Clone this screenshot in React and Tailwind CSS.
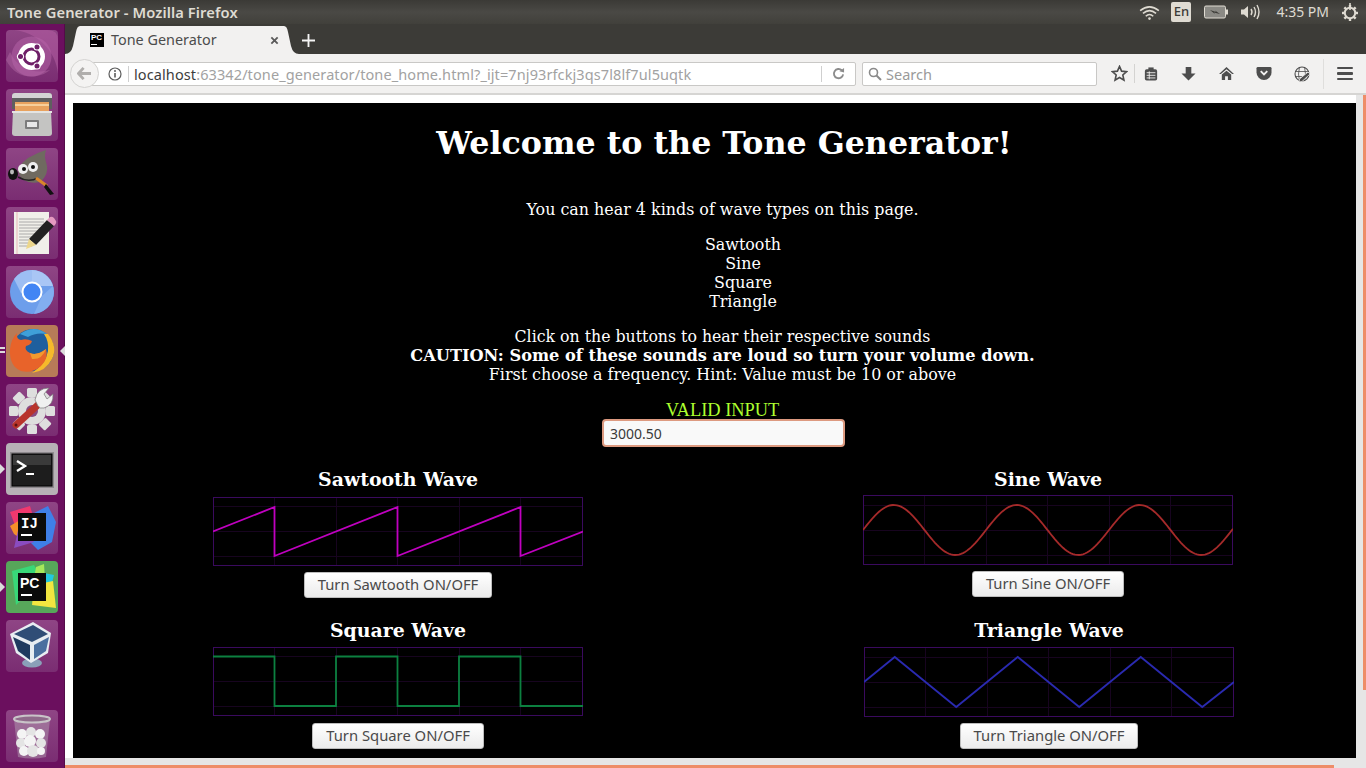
import React from 'react';

const PURPLE_TILE = 'bg-gradient-to-b from-[#8f4585] to-[#7a2d72]';

function UbuntuIcon() {
  return (
    <svg viewBox="0 0 52 52" className="w-full h-full">
      <path d="M8 0 C30 2 50 20 52 44 L52 10 Q52 0 42 0 Z" fill="#b75fa6" opacity="0.5" />
      <path d="M0 30 C10 50 32 50 44 40 C30 44 12 40 4 22 Z" fill="#c77db8" opacity="0.35" />
      <circle cx="25.5" cy="26.5" r="20" fill="#b866aa" opacity="0.5" />
      <circle cx="25.5" cy="26.5" r="13.5" fill="#fff" />
      <circle cx="25.5" cy="26.5" r="7.5" fill="none" stroke="#6e1f68" strokeWidth="3" />
      <circle cx="31" cy="17" r="3.6" fill="#fff" />
      <circle cx="14.5" cy="26.5" r="3.6" fill="#fff" />
      <circle cx="31" cy="36" r="3.6" fill="#fff" />
      <circle cx="31" cy="17" r="2.5" fill="#6e1f68" />
      <circle cx="14.5" cy="26.5" r="2.5" fill="#6e1f68" />
      <circle cx="31" cy="36" r="2.5" fill="#6e1f68" />
    </svg>
  );
}

function FilesIcon() {
  return (
    <svg viewBox="0 0 52 52" className="w-full h-full">
      <path d="M6 7 Q6 4 9 4 L43 4 Q46 4 46 7 L46 20 L6 20 Z" fill="#5f5f5f" />
      <path d="M6 7 Q6 4 9 4 L43 4 Q46 4 46 7 L46 9 L6 9 Z" fill="#d4d4d4" />
      <rect x="9" y="13" width="34" height="10" fill="#e8a25e" />
      <rect x="9" y="15" width="34" height="2" fill="#f7cf9a" />
      <path d="M7 22 L45 22 L46 44 Q46 47 43 47 L9 47 Q6 47 6 44 Z" fill="#c4c4c2" />
      <rect x="6" y="22" width="40" height="2" fill="#e4e4e2" />
      <rect x="19" y="31" width="14" height="9" rx="1" fill="#7c7c7c" />
      <rect x="21" y="33" width="10" height="5" fill="#e8e8e8" />
    </svg>
  );
}

function GimpIcon() {
  return (
    <svg viewBox="0 0 52 52" className="w-full h-full">
      <path d="M12 20 Q20 8 40 2 Q38 8 40 14 Q44 26 34 34 Q24 36 18 32 Q12 28 12 20 Z" fill="#6f6a60" />
      <ellipse cx="7" cy="26" rx="5" ry="6" fill="#111" />
      <ellipse cx="6" cy="24" rx="2" ry="2.4" fill="#bbb" />
      <circle cx="17" cy="21" r="5" fill="#eee" />
      <circle cx="27" cy="19" r="5" fill="#eee" />
      <circle cx="18" cy="21" r="2" fill="#111" />
      <circle cx="27" cy="19" r="2" fill="#111" />
      <path d="M12 29 Q22 35 32 30" fill="none" stroke="#222" strokeWidth="1.5" />
      <path d="M30 30 L41 38" stroke="#d9862a" strokeWidth="3" />
      <path d="M40 36 L48 46 L44 47 L38 39 Z" fill="#111" />
    </svg>
  );
}

function EditorIcon() {
  return (
    <svg viewBox="0 0 52 52" className="w-full h-full">
      <rect x="8" y="5" width="35" height="42" fill="#f0efe9" />
      <path d="M11 5 L11 47" stroke="#e9b7b7" />
      {[12, 15, 18, 21, 24, 27, 30, 33, 36, 39].map(y => (
        <path key={y} d={`M13 ${y} L${y > 27 ? 26 : 38} ${y}`} stroke="#9a9a9a" strokeWidth="0.8" />
      ))}
      <path d="M41 13 L48 19 L30 38 L23 32 Z" fill="#222" />
      <path d="M41 13 L44 10 Q46 9 48 11 L50 14 Q51 16 48 19 Z" fill="#e49ac0" />
      <path d="M23 32 L30 38 L20 42 Z" fill="#ecd68a" />
    </svg>
  );
}

function ChromiumIcon() {
  return (
    <svg viewBox="0 0 52 52" className="w-full h-full">
      <circle cx="26" cy="26" r="22" fill="#6d9eeb" />
      <path d="M26 4 A22 22 0 0 1 47 20 L26 20 Z" fill="#a9c6f5" />
      <path d="M8 13 A22 22 0 0 1 26 4 L26 20 L15 27 Z" fill="#9dbef3" />
      <path d="M47 20 A22 22 0 0 1 28 48 L36 30 Z" fill="#82aef0" />
      <circle cx="26" cy="26" r="9.5" fill="#4285f4" stroke="#fff" strokeWidth="2" />
    </svg>
  );
}

function FirefoxIcon() {
  return (
    <svg viewBox="0 0 52 52" className="w-full h-full">
      <circle cx="27" cy="25" r="21" fill="#1e5f9e" />
      <path d="M14 9 Q28 -1 41 9 Q30 7 22 12 Z" fill="#3fa0d8" />
      <path d="M42 9 Q52 22 46 34 Q40 46 26 48 Q40 38 42 26 Q43 16 38 9 Z" fill="#f6b92b" />
      <path d="M4 24 Q5 14 11 8 Q10 14 15 15 Q20 13 26 16 Q25 20 20 21 Q18 25 24 28 Q31 31 40 24 Q43 33 35 41 Q26 49 15 46 Q3 41 4 24 Z" fill="#e8632a" />
      <path d="M24 28 Q31 31 40 24 Q36 35 26 34 Z" fill="#f29a2e" />
    </svg>
  );
}

function SettingsIcon() {
  return (
    <svg viewBox="0 0 52 52" className="w-full h-full">
      <circle cx="26" cy="27" r="14" fill="#dedede" />
      <circle cx="26" cy="27" r="6" fill="#8a4a80" />
      {[0, 45, 90, 135, 180, 225, 270, 315].map(a => (
        <rect key={a} x="21" y="4" width="10" height="9" rx="1.5" fill="#dedede" transform={`rotate(${a} 26 27)`} />
      ))}
      <path d="M10 41 L34 19" stroke="#b8342c" strokeWidth="7" strokeLinecap="round" />
      <path d="M29 16 Q31 4 43 4 L38 10 L41 15 L47 10 Q48 21 38 24 Q34 25 32 22 Z" fill="#f0f0f0" stroke="#777" strokeWidth="0.7" />
      <circle cx="10" cy="41" r="1.5" fill="#5a1410" />
    </svg>
  );
}

function TerminalIcon() {
  return (
    <svg viewBox="0 0 52 52" className="w-full h-full">
      <rect x="4" y="9" width="44" height="36" fill="#8e8a8e" />
      <rect x="6" y="11" width="40" height="32" fill="#1d1d1d" stroke="#000" />
      <rect x="7" y="12" width="38" height="10" fill="#3a3a3a" />
      <path d="M11 18 L19 23 L11 28" fill="none" stroke="#fff" strokeWidth="2.4" />
      <path d="M20 31 L28 31" stroke="#fff" strokeWidth="2" />
    </svg>
  );
}

function IntellijIcon() {
  return (
    <svg viewBox="0 0 52 52" className="w-full h-full">
      <path d="M4 10 L24 4 L30 24 L10 26 Z" fill="#f0386e" />
      <path d="M26 12 L42 4 L50 20 L46 40 L32 48 L20 36 Z" fill="#3f7fe8" />
      <path d="M4 24 L14 18 L14 36 L8 32 Z" fill="#f4902a" />
      <path d="M8 46 L13 24 L28 40 Z" fill="#8a4cc0" />
      <rect x="12" y="11" width="28" height="28" fill="#0b0b0b" />
      <text x="15" y="26" fill="#fff" fontSize="14" fontWeight="700" fontFamily="Liberation Mono, monospace">IJ</text>
      <rect x="15" y="32" width="11" height="2" fill="#fff" />
    </svg>
  );
}

function PycharmIcon() {
  return (
    <svg viewBox="0 0 52 52" className="w-full h-full">
      <path d="M6 10 L28 4 L36 18 L10 44 Z" fill="#38d878" />
      <path d="M30 6 L38 3 L39 18 L28 18 Z" fill="#a6e85a" />
      <path d="M38 12 L48 14 L44 30 L36 24 Z" fill="#22c8e0" />
      <path d="M28 24 L47 20 L50 47 L26 44 Z" fill="#f2e640" />
      <rect x="12" y="12" width="28" height="28" fill="#0b0b0b" />
      <text x="14" y="27" fill="#fff" fontSize="14" fontWeight="700" fontFamily="Liberation Sans, sans-serif">PC</text>
      <rect x="15" y="33" width="11" height="2" fill="#fff" />
    </svg>
  );
}

function VirtualBoxIcon() {
  return (
    <svg viewBox="0 0 52 52" className="w-full h-full">
      <ellipse cx="26" cy="43" rx="10" ry="4.5" fill="#8aa0b8" />
      <path d="M27 2 L45 13 L42 33 L25 43 L10 33 L4 14 Z" fill="#e8edf2" />
      <path d="M27 5 L42 14 L26 22 L8 14 Z" fill="#2f4d76" />
      <path d="M7 17 L24 25 L24 40 L12 31 Z" fill="#1f3a5f" />
      <path d="M28 25 L43 17 L40 31 L28 39 Z" fill="#4a6f9f" />
    </svg>
  );
}

function TrashIcon() {
  const crumples = [[16, 24, 5], [25, 22, 5], [34, 24, 5], [15, 33, 5], [24, 31, 6], [35, 33, 5], [18, 41, 5], [27, 41, 6], [35, 41, 4]];
  return (
    <svg viewBox="0 0 52 52" className="w-full h-full">
      <path d="M8 9 L44 9 L40 47 Q26 50 12 47 Z" fill="#b9a8b8" opacity="0.45" />
      {crumples.map(([cx, cy, r], i) => (
        <circle key={i} cx={cx} cy={cy} r={r} fill={i % 2 ? '#e4e4e4' : '#f4f4f4'} />
      ))}
      <ellipse cx="26" cy="9" rx="18" ry="3.5" fill="#8f6a8a" stroke="#c9c4c8" strokeWidth="2" />
    </svg>
  );
}

const launcherItems = [
  { icon: <UbuntuIcon />, tile: PURPLE_TILE },
  { icon: <FilesIcon />, tile: PURPLE_TILE },
  { icon: <GimpIcon />, tile: PURPLE_TILE },
  { icon: <EditorIcon />, tile: PURPLE_TILE },
  { icon: <ChromiumIcon />, tile: PURPLE_TILE },
  { icon: <FirefoxIcon />, tile: 'bg-[#b77b58]', left: 'double', right: true },
  { icon: <SettingsIcon />, tile: PURPLE_TILE },
  { icon: <TerminalIcon />, tile: 'bg-[#b7b1b6]', left: 'single' },
  { icon: <IntellijIcon />, tile: PURPLE_TILE },
  { icon: <PycharmIcon />, tile: 'bg-[#57a65a]', left: 'single' },
  { icon: <VirtualBoxIcon />, tile: PURPLE_TILE },
];

function LauncherTile({ icon, tile, left, right, className = '' }) {
  return (
    <div className={`relative h-[52px] w-[52px] ml-[6px] shrink-0 ${className}`}>
      <div className={`h-full w-full rounded-[4px] overflow-hidden ${tile}`}>{icon}</div>
      {left === 'single' && (
        <div className="absolute -left-[6px] top-[21px] w-0 h-0 border-y-[5px] border-y-transparent border-l-[5px] border-l-[#dcdcdc]" />
      )}
      {left === 'double' && (
        <div className="absolute -left-[6px] top-[22px] flex flex-col gap-[2px]">
          <div className="h-[2px] w-[5px] bg-[#dcdcdc]" />
          <div className="h-[2px] w-[5px] bg-[#dcdcdc]" />
        </div>
      )}
      {right && (
        <div className="absolute -right-[7px] top-[21px] w-0 h-0 border-y-[5px] border-y-transparent border-r-[5px] border-r-[#dcdcdc]" />
      )}
    </div>
  );
}

function Launcher() {
  return (
    <div className="w-[65px] shrink-0 flex flex-col gap-[7px] pt-[6px] pb-[6px] bg-[#6b0f5e] border-r border-[#540b49]">
      {launcherItems.map((item, i) => (
        <LauncherTile key={i} {...item} />
      ))}
      <LauncherTile icon={<TrashIcon />} tile={PURPLE_TILE} className="mt-auto" />
    </div>
  );
}

function TopPanel() {
  return (
    <div className="h-6 shrink-0 flex items-center bg-gradient-to-b from-[#3b3a36] via-[#4a4945] to-[#41403b] font-['Noto_Sans',sans-serif] text-[#dfdbd2]">
      <span className="pl-[7px] text-[14.7px] font-semibold leading-none tracking-[0.1px]">Tone Generator - Mozilla Firefox</span>
      <div className="ml-auto flex items-center">
        <svg viewBox="0 0 22 16" className="w-[21px] h-[15px]">
          <path d="M1 6 Q11 -2 21 6" fill="none" stroke="#dfdbd2" strokeWidth="1.6" />
          <path d="M4 9 Q11 3 18 9" fill="none" stroke="#dfdbd2" strokeWidth="1.6" />
          <path d="M7 12 Q11 8 15 12" fill="none" stroke="#dfdbd2" strokeWidth="1.6" />
          <circle cx="11" cy="14.5" r="1.4" fill="#dfdbd2" />
        </svg>
        <div className="ml-[11px] w-5 h-5 rounded-[2px] bg-[#dfdbd2] text-[#3c3b37] text-[13px] flex items-center justify-center font-medium">En</div>
        <svg viewBox="0 0 25 14" className="ml-[13px] w-[25px] h-[14px]">
          <rect x="0.5" y="1" width="21" height="12" rx="1.5" fill="#8b8a85" stroke="#dfdbd2" />
          <rect x="22" y="4.5" width="2" height="5" fill="#dfdbd2" />
          <path d="M6 5 L12 7 L11 5.5 L16 9 L10 7.5 L11 9 Z" fill="#3c3b37" />
        </svg>
        <svg viewBox="0 0 20 16" className="ml-[12px] w-5 h-4">
          <path d="M0 5.5 L3 5.5 L7 2 L7 14 L3 10.5 L0 10.5 Z" fill="#dfdbd2" />
          <path d="M10 5 Q12 8 10 11" fill="none" stroke="#dfdbd2" strokeWidth="1.4" />
          <path d="M13 3 Q16 8 13 13" fill="none" stroke="#dfdbd2" strokeWidth="1.4" />
          <path d="M16 1 Q20 8 16 15" fill="none" stroke="#dfdbd2" strokeWidth="1.4" />
        </svg>
        <span className="ml-[15px] text-[14px] leading-none">4:35 PM</span>
        <svg viewBox="0 0 18 18" className="ml-[12px] mr-[7px] w-[18px] h-[18px]">
          <circle cx="9" cy="10" r="5.2" fill="none" stroke="#dfdbd2" strokeWidth="2" />
          {[0, 45, 90, 135, 180, 225, 270, 315].map(a => (
            <rect key={a} x="7.8" y="2" width="2.4" height="3" fill="#dfdbd2" transform={`rotate(${a} 9 10)`} />
          ))}
          <rect x="8.2" y="0" width="1.6" height="7" fill="#dfdbd2" />
        </svg>
      </div>
    </div>
  );
}

function TabStrip() {
  return (
    <div className="h-[30px] shrink-0 flex items-end bg-[#3c3b37] font-['Noto_Sans',sans-serif]">
      <svg viewBox="0 0 15 28" className="w-[15px] h-7 shrink-0">
        <path d="M0 28 Q6 28 8 20 L11 6 Q12 0 15 0 L15 28 Z" fill="#f2f1f0" />
      </svg>
      <div className="w-[204px] h-7 flex items-center bg-[#f2f1f0] pl-[10px] pr-[5px]">
        <div className="relative w-[14px] h-[14px] bg-black shrink-0">
          <span className="absolute left-[1px] top-0 text-[8px] leading-[10px] font-bold text-white font-['Liberation_Sans',sans-serif]">PC</span>
          <div className="absolute left-[1px] bottom-[2px] w-[6px] h-px bg-white" />
        </div>
        <span className="ml-[7px] text-[14.4px] text-[#4c4c4c] leading-none">Tone Generator</span>
        <svg viewBox="0 0 10 10" className="ml-auto w-[9px] h-[9px]">
          <path d="M1.5 1.5 L8.5 8.5 M8.5 1.5 L1.5 8.5" stroke="#5a5a5a" strokeWidth="2" />
        </svg>
      </div>
      <svg viewBox="0 0 15 28" className="w-[15px] h-7 shrink-0 -scale-x-100">
        <path d="M0 28 Q6 28 8 20 L11 6 Q12 0 15 0 L15 28 Z" fill="#f2f1f0" />
      </svg>
      <svg viewBox="0 0 14 14" className="ml-[3px] mb-[7px] w-[13px] h-[13px]">
        <path d="M7 0 L7 14 M0 7 L14 7" stroke="#f4f4f4" strokeWidth="2" />
      </svg>
    </div>
  );
}

function NavBar() {
  const iconColor = '#4d4d4d';
  return (
    <div className="h-[41px] shrink-0 flex items-center bg-[#f2f1f0] border-b-2 border-[#d6d5d3] font-['Noto_Sans',sans-serif]">
      <div className="relative z-10 ml-[5px] w-[29px] h-[29px] rounded-full bg-[#f4f3f2] border border-[#d4d3d1] flex items-center justify-center shrink-0">
        <svg viewBox="0 0 16 14" className="w-[15px] h-[13px]">
          <path d="M7 1 L1.5 7 L7 13 M2 7 L15 7" fill="none" stroke="#b0aeac" strokeWidth="3" />
        </svg>
      </div>
      <div className="-ml-[10px] h-[24px] w-[767px] flex items-center bg-white border border-[#c9c8c6] rounded-r-[2px] pl-[18px] shrink-0">
        <svg viewBox="0 0 14 14" className="w-[14px] h-[14px] shrink-0">
          <circle cx="7" cy="7" r="6" fill="none" stroke="#5c5c5c" strokeWidth="1.2" />
          <circle cx="7" cy="4" r="1" fill="#5c5c5c" />
          <rect x="6.2" y="6" width="1.6" height="4.5" fill="#5c5c5c" />
        </svg>
        <div className="ml-[6px] w-px h-[16px] bg-[#cfcfcf]" />
        <span className="ml-[5px] pt-px w-[560px] text-[14.5px] leading-none whitespace-nowrap tracking-[0.1px] text-[#a2a2a2]">
          <span className="text-[#3d3d3d]">localhost</span>:63342/tone_generator/tone_home.html?_ijt=7nj93rfckj3qs7l8lf7ul5uqtk
        </span>
        <div className="ml-auto w-px h-[16px] bg-[#cfcfcf]" />
        <svg viewBox="0 0 14 14" className="mx-[10px] w-[13px] h-[13px] shrink-0">
          <path d="M12 8 A5 5 0 1 1 10.5 3.5" fill="none" stroke="#8c8c8c" strokeWidth="2" />
          <path d="M8 4.5 L13 6 L13 1 Z" fill="#8c8c8c" />
        </svg>
      </div>
      <div className="ml-[6px] h-[24px] w-[235px] flex items-center bg-white border border-[#c9c8c6] rounded-[2px] pl-[5px] shrink-0">
        <svg viewBox="0 0 14 14" className="w-[14px] h-[14px]">
          <circle cx="5.5" cy="5.5" r="4" fill="none" stroke="#8a8a8a" strokeWidth="1.6" />
          <path d="M8.5 8.5 L13 13" stroke="#8a8a8a" strokeWidth="2" />
        </svg>
        <span className="ml-[4px] pt-px text-[14.5px] leading-none text-[#9a9a9a]">Search</span>
      </div>
      <svg viewBox="0 0 18 18" className="ml-[14px] w-[17px] h-[17px] shrink-0">
        <path d="M9 1.5 L11.2 6.5 L16.5 7 L12.5 10.6 L13.7 16 L9 13.2 L4.3 16 L5.5 10.6 L1.5 7 L6.8 6.5 Z" fill="none" stroke={iconColor} strokeWidth="1.7" />
      </svg>
      <div className="ml-[6px] w-px h-[19px] bg-[#d4d3d1]" />
      <svg viewBox="0 0 16 16" className="ml-[9px] w-[14px] h-[14px] shrink-0">
        <rect x="1" y="2.5" width="14" height="13" rx="2" fill={iconColor} />
        <rect x="5" y="0.5" width="6" height="3" fill={iconColor} />
        <path d="M3 6.5 L13 6.5 M3 9.5 L13 9.5 M3 12.5 L13 12.5 M6 5 L6 14" stroke="#f2f1f0" strokeWidth="1" />
      </svg>
      <svg viewBox="0 0 16 16" className="ml-[23px] w-[15px] h-[15px] shrink-0">
        <path d="M5 1 L11 1 L11 8 L15.5 8 L8 15.5 L0.5 8 L5 8 Z" fill={iconColor} />
      </svg>
      <svg viewBox="0 0 16 16" className="ml-[23px] w-[15px] h-[15px] shrink-0">
        <path d="M8 1 L16 8.5 L14 8.5 L8 3.5 L2 8.5 L0 8.5 Z" fill={iconColor} />
        <path d="M3 9 L8 5 L13 9 L13 15 L9.5 15 L9.5 11 L6.5 11 L6.5 15 L3 15 Z" fill={iconColor} />
      </svg>
      <svg viewBox="0 0 16 16" className="ml-[22px] w-[16px] h-[15px] shrink-0">
        <path d="M1.5 1 L14.5 1 Q16 1 16 2.5 L16 7 A8 8 0 0 1 0 7 L0 2.5 Q0 1 1.5 1 Z" fill={iconColor} />
        <path d="M4.5 5.5 L8 9 L11.5 5.5" fill="none" stroke="#f2f1f0" strokeWidth="2" />
      </svg>
      <svg viewBox="0 0 16 16" className="ml-[22px] w-[16px] h-[16px] shrink-0">
        <circle cx="8" cy="8" r="7" fill="none" stroke={iconColor} strokeWidth="1.1" />
        <path d="M1 5.5 L15 5.5 M1 10.5 L15 10.5 M5.5 1 Q3.5 8 5.5 15 M10.5 1 Q12.5 8 10.5 15" stroke={iconColor} strokeWidth="0.8" fill="none" />
        <path d="M14 6 L16 8 L8 15.5 L5 16 L5.5 13 Z" fill={iconColor} stroke="#f2f1f0" strokeWidth="0.8" />
      </svg>
      <div className="ml-[13px] w-px h-[30px] bg-[#dfdedc]" />
      <div className="ml-[13px] flex flex-col gap-[3px] shrink-0">
        <div className="w-4 h-[2.5px] bg-[#4d4d4d] rounded-[1px]" />
        <div className="w-4 h-[2.5px] bg-[#4d4d4d] rounded-[1px]" />
        <div className="w-4 h-[2.5px] bg-[#4d4d4d] rounded-[1px]" />
      </div>
    </div>
  );
}

// grid of the oscilloscope view, same for all four waves
function WaveCanvas({ path, color, height = 69 }) {
  const vLines = [61.5, 123.5, 184.5, 246.5, 307.5];
  const mid = Math.floor(height / 2) + 0.5;
  return (
    <svg viewBox={`0 0 370 ${height}`} className="block w-[370px]" style={{ height }}>
      {vLines.map(x => (
        <path key={x} d={`M${x} 0 L${x} ${height}`} stroke="#17041f" strokeWidth="1" />
      ))}
      {[mid - 25, mid, mid + 25].map(y => (
        <path key={y} d={`M0 ${y} L370 ${y}`} stroke="#17041f" strokeWidth="1" />
      ))}
      <rect x="0.5" y="0.5" width="369" height={height - 1} fill="none" stroke="#3a0a5e" strokeWidth="1" />
      <path d={path} fill="none" stroke={color} strokeWidth="1.8" />
    </svg>
  );
}

const sawPath = 'M0 34.5 L61.5 10 L61.5 59 L184.5 10 L184.5 59 L307.5 10 L307.5 59 L370 34.5';
const squarePath = 'M0 9.5 L61.5 9.5 L61.5 59 L123 59 L123 9.5 L184.5 9.5 L184.5 59 L246 59 L246 9.5 L307.5 9.5 L307.5 59 L370 59';
const trianglePath = 'M0 35 L30.75 10 L92.25 60 L153.75 10 L215.25 60 L276.75 10 L338.25 60 L370 35';
const sinePath = Array.from({ length: 186 }, (_, i) => {
  const x = i * 2;
  const y = 35 - 25 * Math.sin((x / 123) * 2 * Math.PI);
  return `${i === 0 ? 'M' : 'L'}${x} ${y.toFixed(2)}`;
}).join(' ');

function WaveBlock({ title, path, color, label, height, canvasMt = 'mt-[7px]', buttonMt = 'mt-[6px]', className = '' }) {
  return (
    <div className={`flex flex-col items-center w-[370px] ${className}`}>
      <h2 className="text-[18.9px] font-bold leading-[22px]">{title}</h2>
      <div className={canvasMt}>
        <WaveCanvas path={path} color={color} height={height} />
      </div>
      <button className={`${buttonMt} h-[26px] pb-px px-[13px] rounded-[3px] bg-gradient-to-b from-white to-[#ebebeb] border border-[#bdbdbd] text-[#4a4a4a] text-[14.8px] leading-none font-['Noto_Sans',sans-serif]`}>
        {label}
      </button>
    </div>
  );
}

function TonePage() {
  return (
    <div className="h-full bg-black text-white font-['DejaVu_Serif',serif] text-[15.9px] leading-[19px] pl-[16px] overflow-hidden text-center">
      <h1 className="pt-[21px] pl-[3px] text-[31.7px] font-bold leading-[37px]">Welcome to the Tone Generator!</h1>
      <p className="mt-[39px]">You can hear 4 kinds of wave types on this page.</p>
      <ul className="mt-[16px] pl-[41px]">
        <li>Sawtooth</li>
        <li>Sine</li>
        <li>Square</li>
        <li>Triangle</li>
      </ul>
      <p className="mt-[16px]">
        <span className="text-[15.75px]">Click on the buttons to hear their respective sounds</span>
        <br />
        <b className="text-[16.2px]">CAUTION: Some of these sounds are loud so turn your volume down.</b>
        <br />
        First choose a frequency. Hint: Value must be 10 or above
      </p>
      <div className="mt-[17px] text-[18.4px] leading-[19px] text-[#adff2f] font-['Liberation_Serif',serif]">VALID INPUT</div>
      <input
        readOnly
        value="3000.50"
        className="block mx-auto -mt-px translate-x-px w-[243px] h-[28px] rounded-[4px] bg-[#f9f9f9] border-2 border-[#dd9a80] px-[6px] text-[14px] text-[#3a3a3a] font-['Noto_Sans',sans-serif]"
      />
      <div className="-ml-[16px] pl-[140px] pr-[123px]">
        <div className="mt-[21px] flex justify-between items-start">
          <WaveBlock title="Sawtooth Wave" path={sawPath} color="#c000c0" label="Turn Sawtooth ON/OFF" />
          <WaveBlock title="Sine Wave" path={sinePath} color="#a52a2a" label="Turn Sine ON/OFF" height={70} canvasMt="mt-[5px]" />
        </div>
        <div className="mt-[21px] flex justify-between items-start">
          <WaveBlock title="Square Wave" path={squarePath} color="#0c8040" label="Turn Square ON/OFF" canvasMt="mt-[6px]" buttonMt="mt-[7px]" />
          <WaveBlock title="Triangle Wave" path={trianglePath} color="#2a2ab0" label="Turn Triangle ON/OFF" height={70} canvasMt="mt-[6px]" className="translate-x-px" />
        </div>
      </div>
    </div>
  );
}

function Browser() {
  return (
    <div className="flex-1 min-w-0 flex flex-col">
      <TabStrip />
      <NavBar />
      <div className="flex-1 min-h-0 flex bg-white">
        <div className="flex-1 min-w-0 flex flex-col">
          <div className="flex-1 min-h-0 pl-2 pt-2">
            <TonePage />
          </div>
          {/* horizontal scrollbar */}
          <div className="h-[10px] shrink-0 flex flex-col justify-end bg-[#e6e6e6]">
            <div className="h-[3px] w-[1269px] bg-[#ee8d68]" />
          </div>
        </div>
        {/* vertical scrollbar */}
        <div className="w-[10px] shrink-0 flex justify-end bg-[#e6e6e6]">
          <div className="w-[3px] h-[595px] bg-[#ee8d68]" />
        </div>
      </div>
    </div>
  );
}

export default function App() {
  return (
    <div className="w-[1366px] h-[768px] flex flex-col overflow-hidden">
      <TopPanel />
      <div className="flex-1 min-h-0 flex">
        <Launcher />
        <Browser />
      </div>
    </div>
  );
}
